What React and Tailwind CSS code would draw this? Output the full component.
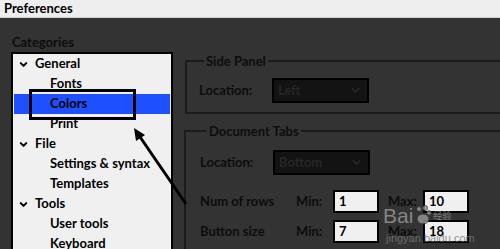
import { ChevronDown } from 'lucide-react';

const tree = [
    { label: 'General', level: 0 },
    { label: 'Fonts', level: 1 },
    { label: 'Colors', level: 1, selected: true },
    { label: 'Print', level: 1 },
    { label: 'File', level: 0 },
    { label: 'Settings & syntax', level: 1 },
    { label: 'Templates', level: 1 },
    { label: 'Tools', level: 0 },
    { label: 'User tools', level: 1 },
    { label: 'Keyboard', level: 1 },
];

function Select({ value }) {
    return (
        <div className="w-[97px] h-[25px] bg-[#131313] border-2 border-black flex items-center justify-between pl-[4px] pr-[5px] text-[#262626]">
            <span>{value}</span>
            <ChevronDown size={13} strokeWidth={3} />
        </div>
    );
}

function NumBox({ value }) {
    return (
        <div className="w-[46px] h-[23px] bg-[#f0f0f0] border-2 border-black flex items-center pl-[4px] text-black">
            {value}
        </div>
    );
}

export default function App() {
    return (
        <div
            className="relative w-[500px] h-[249px] overflow-hidden bg-[#333333] flex flex-col text-[13px] font-bold text-[#0d0d0d] scheme-only-light forced-color-adjust-none"
            style={{ fontFamily: 'Lato, "Open Sans", sans-serif' }}
        >
            {/* --- Title bar --- */}
            <div className="h-[18px] bg-[#eeeeee] border-b border-[#c8d4d0] flex items-center pl-[4px] text-black">
                Preferences
            </div>

            <div className="flex flex-1 min-h-0">
                {/* --- Categories --- */}
                <div className="pl-[11px] pt-[14px] flex flex-col">
                    <div className="h-[22px] leading-[20px] pl-[1px]">Categories</div>
                    <div className="w-[162px] bg-[#f0f0f0] border-2 border-black px-[1px] text-black">
                        {tree.map((item) => (
                            <div
                                key={item.label}
                                className={
                                    'h-[20px] flex items-center ' +
                                    (item.selected ? 'bg-[#1e50ff] ' : '') +
                                    (item.level === 0 ? 'pl-[4px]' : 'pl-[36px]')
                                }
                            >
                                {item.level === 0 && (
                                    <ChevronDown size={11} strokeWidth={4.5} className="mr-[6px]" />
                                )}
                                {item.label}
                            </div>
                        ))}
                    </div>
                </div>

                {/* --- Right panels --- */}
                <div className="flex-1 pl-[11px] pt-[36px] mr-[-20px]">
                    <fieldset className="border-2 border-[#1c1c1c] pl-[12px] pt-[10px] pb-[9px] ml-[1px]">
                        <legend className="leading-[14px] ml-[5px] px-[2px]">Side Panel</legend>
                        <div className="flex items-center">
                            <span className="w-[73px]">Location:</span>
                            <Select value="Left" />
                        </div>
                    </fieldset>

                    <fieldset className="border-2 border-[#1c1c1c] pl-[14px] pt-[12px] pb-[10px] mt-[10px]">
                        <legend className="leading-[14px] ml-[7px] px-[2px]">Document Tabs</legend>
                        <div className="flex items-center">
                            <span className="w-[73px]">Location:</span>
                            <Select value="Bottom" />
                        </div>
                        <div className="flex items-center mt-[15px]">
                            <span className="w-[96px]">Num of rows</span>
                            <span className="w-[37px]">Min:</span>
                            <NumBox value="1" />
                            <span className="w-[35px] ml-[9px]">Max:</span>
                            <NumBox value="10" />
                        </div>
                        <div className="flex items-center mt-[7px]">
                            <span className="w-[96px]">Button size</span>
                            <span className="w-[37px]">Min:</span>
                            <NumBox value="7" />
                            <span className="w-[35px] ml-[9px]">Max:</span>
                            <NumBox value="18" />
                        </div>
                    </fieldset>
                </div>
            </div>

            {/* --- annotation box + arrow --- */}
            <div className="absolute left-[29px] top-[89px] w-[107px] h-[31px] border-[3px] border-black" />
            <svg className="absolute left-0 top-0" width="500" height="249" viewBox="0 0 500 249">
                <line x1="186" y1="204" x2="138" y2="134" stroke="#000" strokeWidth="3" />
                <polygon points="134,128 145,135 136,141" fill="#000" />
            </svg>

            {/* --- watermark --- */}
            <div className="absolute left-[383px] top-[204px] flex items-end opacity-80 pointer-events-none">
                <span className="text-[21px] leading-[24px] font-normal text-[#9a9a9a]" style={{ fontFamily: '"Liberation Sans", sans-serif' }}>
                    Bai
                </span>
                <svg width="20" height="22" viewBox="0 0 20 22" className="mb-[2px]">
                    <circle cx="6" cy="5" r="2.5" fill="#999" stroke="#333" />
                    <circle cx="12" cy="4" r="2.5" fill="#999" stroke="#333" />
                    <circle cx="16" cy="9" r="2.3" fill="#999" stroke="#333" />
                    <ellipse cx="10" cy="15" rx="6" ry="5" fill="#999" stroke="#333" />
                </svg>
                <span className="text-[9px] leading-[12px] font-normal text-[#999] mb-[6px]" style={{ fontFamily: '"Noto Sans CJK SC", sans-serif' }}>
                    经验
                </span>
            </div>
            <div
                className="absolute left-[386px] top-[230px] text-[11px] font-normal text-[#7a7a7a] opacity-80 pointer-events-none"
                style={{ fontFamily: '"Liberation Sans", sans-serif' }}
            >
                jingyan.baidu.com
            </div>
        </div>
    );
}
